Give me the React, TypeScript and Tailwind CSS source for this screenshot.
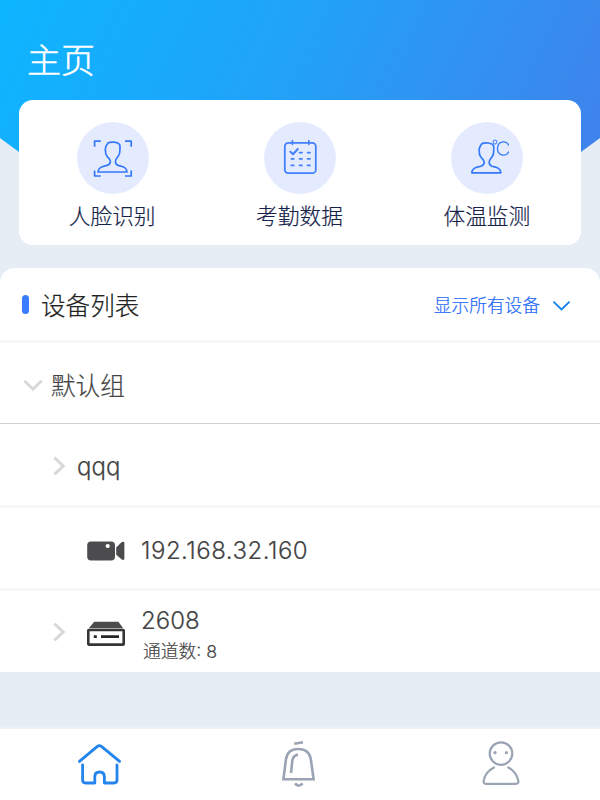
import type { ReactNode } from "react";

const FONT = "font-[Inter,'Noto_Sans_CJK_SC',sans-serif]";

function PersonPath() {
  return (
    <path d="M14.8 3 C18 1.6 24.4 2.2 26.2 4.6 C27 6.5 26.6 9.4 26.4 11.6 C26.6 13.6 25.8 15 24.6 16.6 C23.6 18 22 19.6 22 21.6 C22 23.6 22.6 24.8 24.8 25.6 C29 26.8 33.2 27 33.6 32.2 H4.6 C5 27 9.4 26.8 13.6 25.6 C15.8 24.8 17 23.6 17 21.6 C17 19.6 14.8 18 13.8 16.6 C12.4 15 11.8 13.6 12.2 11.6 C11.4 9.4 13 5.4 14.8 3 Z" />
  );
}

function FaceIcon() {
  return (
    <svg width="40" height="40" viewBox="0 0 40 40" fill="none" stroke="#3478fb" strokeWidth="1.7" strokeLinejoin="round">
      <path d="M1.6 8.8 V3.2 H7.8 M32 3.2 H38.2 V8.8 M1.6 32.6 V38 H7.8 M32 38 H38.2 V32.6" />
      <g transform="translate(0.4 1.8)">
        <PersonPath />
      </g>
    </svg>
  );
}

function CalendarIcon() {
  return (
    <svg width="40" height="40" viewBox="0 0 40 40" fill="none" stroke="#4380fb" strokeWidth="1.8" strokeLinecap="round" strokeLinejoin="round">
      <rect x="4.8" y="4.8" width="31" height="30.4" rx="3.5" />
      <path d="M12.4 2.6 V6.4 M28.8 2.6 V6.4" strokeWidth="1.6" />
      <path d="M10.4 13.8 L13 16.2 L17.8 11" strokeWidth="2" />
      <path d="M19.6 14.6 H22 M27.6 14.6 H30 M11.4 20.8 H13.8 M19.6 20.8 H22 M27.6 20.8 H30 M11.4 27.4 H13.8 M19.6 27.4 H22 M27.6 27.4 H30" />
    </svg>
  );
}

function TemperatureIcon() {
  return (
    <svg width="44" height="40" viewBox="-2 0 44 40" fill="none" stroke="#3478fb" strokeWidth="1.7" strokeLinejoin="round">
      <g transform="translate(0.2 2.6)">
        <PersonPath />
      </g>
      <circle cx="28" cy="4" r="2" strokeWidth="1" />
      <path d="M41.6 7.6 C40 2.6 32 2.4 30.6 9 C29.4 17.4 39.2 20 41.8 13.6" strokeWidth="1.3" />
    </svg>
  );
}

function Chevron({ open = false }: { open?: boolean }) {
  return open ? (
    <svg width="20" height="14" viewBox="0 0 20 14" fill="none" stroke="#d8d8d8" strokeWidth="3">
      <path d="M1.4 1.8 L10 10.2 L18.6 1.8" />
    </svg>
  ) : (
    <svg width="14" height="20" viewBox="0 0 14 20" fill="none" stroke="#d8d8d8" strokeWidth="3">
      <path d="M2.4 1.6 L11.2 10 L2.4 18.4" />
    </svg>
  );
}

function CameraIcon() {
  return (
    <svg width="38" height="20" viewBox="0 0 38 20" fill="#4c4c4e">
      <path d="M4 0.4 H24 Q28 0.4 28 4.4 V15.4 Q28 19.4 24 19.4 H4 Q0.2 19.4 0.2 15.4 V4.4 Q0.2 0.4 4 0.4 Z" />
      <circle cx="20.7" cy="5" r="2.1" fill="#fff" />
      <path d="M29.2 6.4 L34.8 1 Q37.4 0 37.4 2 V17.6 Q37.4 19.8 34.8 18.6 L29.2 13.8 Z" />
    </svg>
  );
}

function RecorderIcon() {
  return (
    <svg width="38" height="25" viewBox="0 0 38 25" fill="none">
      <path d="M7.2 0.8 H31.4 L36.2 7.2 H1.8 Z" fill="#4c4c4e" />
      <rect x="1.3" y="9" width="35.4" height="14.6" rx="0.6" stroke="#363636" strokeWidth="2.6" />
      <path d="M6.8 15.6 H9.8 M14 15.6 H32" stroke="#262626" strokeWidth="2.8" />
    </svg>
  );
}

function Feature({ label, children }: { label: string; children: ReactNode }) {
  return (
    <div className="flex flex-1 flex-col items-center pt-[22px]">
      <div className="flex size-[72px] items-center justify-center rounded-full bg-[#e4ebff]">{children}</div>
      <span className="mt-[6px] -ml-px text-[21.7px] leading-8 text-[#15234a]">{label}</span>
    </div>
  );
}

export default function App() {
  return (
    <div className={`flex h-[800px] w-[600px] flex-col overflow-hidden bg-[#e6edf5] font-light text-[#444] [-webkit-text-stroke:0.2px] ${FONT}`}>
      <header className="h-[166px] shrink-0 bg-[linear-gradient(115deg,#0db5ff_0%,#20a3f8_45%,#3094f2_70%,#3f82eb_100%)] pt-[36px] pl-[27px] [clip-path:polygon(0_0,100%_0,100%_138px,562px_166px,38px_166px,0_138px)]">
        <h1 className="text-[34px] leading-[50px] font-light text-white [-webkit-text-stroke:0.5px]">主页</h1>
      </header>

      {/* Feature shortcuts */}
      <section className="relative mx-[19px] -mt-[66px] flex h-[145px] shrink-0 rounded-[14px] bg-white">
        <Feature label="人脸识别"><FaceIcon /></Feature>
        <Feature label="考勤数据"><CalendarIcon /></Feature>
        <Feature label="体温监测"><TemperatureIcon /></Feature>
      </section>

      {/* Device list */}
      <section className="mt-[23px] flex h-[404px] shrink-0 flex-col rounded-t-[15px] bg-white">
        <div className="flex h-[75px] items-center border-b-[3px] border-[#f7f7f7] pt-[4px] pr-[29px] pl-[22px]">
          <span className="mb-[3px] h-[19px] w-[7px] rounded-full bg-[#3b7cff]" />
          <h2 className="ml-3 text-[24.6px] font-light text-[#222]">设备列表</h2>
          <span className="ml-auto text-[17.7px] text-[#1d69f8]">显示所有设备</span>
          <svg className="ml-3" width="19" height="12" viewBox="0 0 19 12" fill="none" stroke="#1683f2" strokeWidth="1.9">
            <path d="M1.4 1.6 L9.5 9.4 L17.6 1.6" />
          </svg>
        </div>
        <div className="flex h-[81px] items-center border-b border-[#cfcfcf] pt-[6px] pl-[23px]">
          <Chevron open />
          <span className="ml-2 text-[24.6px]">默认组</span>
        </div>
        <div className="flex h-[84px] items-center border-b-[3px] border-[#f7f7f7] pt-[2px] pl-[52px]">
          <Chevron />
          <span className="ml-[11px] pt-[3px] text-[24px]">qqq</span>
        </div>
        <div className="flex h-[83px] items-center border-b-[3px] border-[#f7f7f7] pt-[6px] pl-[87px]">
          <CameraIcon />
          <span className="ml-4 text-[24px] tracking-[0.5px]">192.168.32.160</span>
        </div>
        <div className="flex h-[81px] items-center pl-[52px]">
          <Chevron />
          <div className="mt-1 ml-[21px]"><RecorderIcon /></div>
          <div className="ml-4 flex flex-col pt-[9px]">
            <span className="text-[24px] leading-8">2608</span>
            <span className="ml-[2px] text-[17.8px] leading-[30px]">通道数: 8</span>
          </div>
        </div>
      </section>

      {/* Bottom tabs */}
      <nav className="mt-auto flex h-[71px] shrink-0 justify-between bg-white pt-[11px] pr-[78px] pl-[76px] shadow-[0_-1px_3px_#f4f6f8]">
        <svg width="46" height="48" viewBox="0 0 46 48" fill="none" stroke="#2384ed" strokeWidth="2.8" strokeLinecap="round" strokeLinejoin="round">
          <path d="M3.4 21.4 L21.4 6.4 Q23.4 4.8 25.4 6.4 L43.6 21.4" />
          <path d="M6.6 25 V40 Q6.6 43 9.6 43 H18.8 V37 Q18.8 32 23.6 32 Q28.4 32 28.4 37 V43 H38 Q41 43 41 40 V25" />
        </svg>
        <svg className="mr-[7px]" width="40" height="48" viewBox="0 0 40 48" fill="none" stroke="#9aa4b4" strokeWidth="2.6">
          <path d="M16.2 3.8 L25 2.2" />
          <path d="M5.4 39.2 L8 19 Q9.6 9 20.2 9 Q31 9 32.8 19 L35.6 39.2 Z" />
          <path d="M13 33 L14.4 20 Q15.6 15.2 20 14.6" />
          <path d="M17 43.4 Q20.6 48 24.6 43.4" />
        </svg>
        <svg width="42" height="48" viewBox="0 0 42 48" fill="none" stroke="#9aa4b4" strokeWidth="2.2">
          <circle cx="21" cy="13.6" r="11.3" />
          <circle cx="15" cy="12.7" r="1.6" fill="#9aa4b4" stroke="none" />
          <circle cx="26.4" cy="12.7" r="1.6" fill="#9aa4b4" stroke="none" />
          <path d="M14 27.5 Q5 32 3.6 41 Q3.4 43.8 5.8 43.8 H36.2 Q38.6 43.8 38.4 41 Q36.6 32 28.4 27.5" strokeLinecap="round" />
        </svg>
      </nav>
    </div>
  );
}
